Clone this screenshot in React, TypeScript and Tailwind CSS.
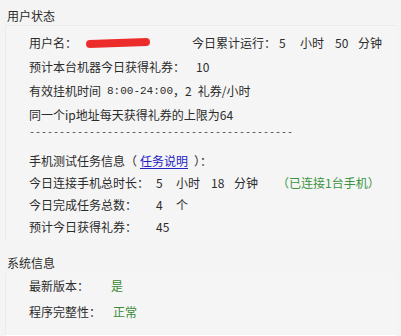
import React from "react";

const font = { fontFamily: '"Noto Sans CJK SC", "Liberation Sans", sans-serif' };
const mono = { fontFamily: '"Liberation Mono", monospace' };

function Row({ h = "h-[24px]", children }: { h?: string; children: React.ReactNode }) {
  return <div className={`flex items-center whitespace-nowrap ${h}`}>{children}</div>;
}

export default function App() {
  return (
    <div
      className="w-[401px] h-[336px] overflow-hidden bg-[#f4f4f4] text-[12px] leading-[14px] text-[#2b2b2b]"
      style={font}
    >
      {/* 用户状态 */}
      <div className="pl-[7px] pt-[9px] h-[25px]">用户状态</div>
      <div className="mx-[5px] border-t border-l border-[#ebebeb] bg-[#f5f5f5] pl-[23px] pt-[5px] h-[215px]">
        <Row>
          <span className="w-[57px]">用户名：</span>
          <span className="w-[106px] flex items-center">
            <span className="inline-block h-[8px] w-[64px] rounded-full bg-[#ec2b2b] -rotate-2 blur-[0.4px]" />
          </span>
          <span className="w-[87px]">今日累计运行：</span>
          <span className="w-[21px]">5</span>
          <span className="w-[35px]">小时</span>
          <span className="w-[23px]">50</span>
          <span>分钟</span>
        </Row>
        <Row>
          <span className="w-[167px]">预计本台机器今日获得礼券：</span>
          <span>10</span>
        </Row>
        <Row>
          <span>有效挂机时间</span>
          <span className="ml-[6px] text-[11px]" style={mono}>
            8:00-24:00
          </span>
          <span>，2</span>
          <span className="ml-[6px]">礼券/小时</span>
        </Row>
        <Row>
          <span>同一个ip地址每天获得礼券的上限为64</span>
        </Row>
        <Row h="h-[12px]">
          <div className="text-[10px] leading-[12px] text-[#555]" style={mono}>
            {"-".repeat(44)}
          </div>
        </Row>
        <div className="h-[11px]" />
        <Row h="h-[22px]">
          <span>手机测试任务信息（</span>
          <a className="ml-[3px] text-[#2323c4] underline underline-offset-2">任务说明</a>
          <span className="ml-[6px]">）：</span>
        </Row>
        <Row h="h-[22px]">
          <span className="w-[127px]">今日连接手机总时长：</span>
          <span className="w-[20px]">5</span>
          <span className="w-[35px]">小时</span>
          <span className="w-[23px]">18</span>
          <span className="w-[43px]">分钟</span>
          <span className="text-[#3b9441]">（已连接1台手机）</span>
        </Row>
        <Row h="h-[22px]">
          <span className="w-[127px]">今日完成任务总数：</span>
          <span className="w-[20px]">4</span>
          <span>个</span>
        </Row>
        <Row h="h-[22px]">
          <span className="w-[127px]">预计今日获得礼券：</span>
          <span>45</span>
        </Row>
      </div>

      {/* 系统信息 */}
      <div className="pl-[7px] pt-[13px] h-[33px] flex items-center">系统信息</div>
      <div className="mx-[5px] border-l border-[#ebebeb] bg-[#f5f5f5] pl-[23px] h-[62px]">
        <Row h="h-[25px]">
          <span className="w-[82px]">最新版本：</span>
          <span className="text-[#3b8a35]">是</span>
        </Row>
        <Row h="h-[27px]">
          <span className="w-[84px]">程序完整性：</span>
          <span className="text-[#3b8a35]">正常</span>
        </Row>
      </div>
      <div className="mx-[5px] h-[2px] bg-white" />
    </div>
  );
}
